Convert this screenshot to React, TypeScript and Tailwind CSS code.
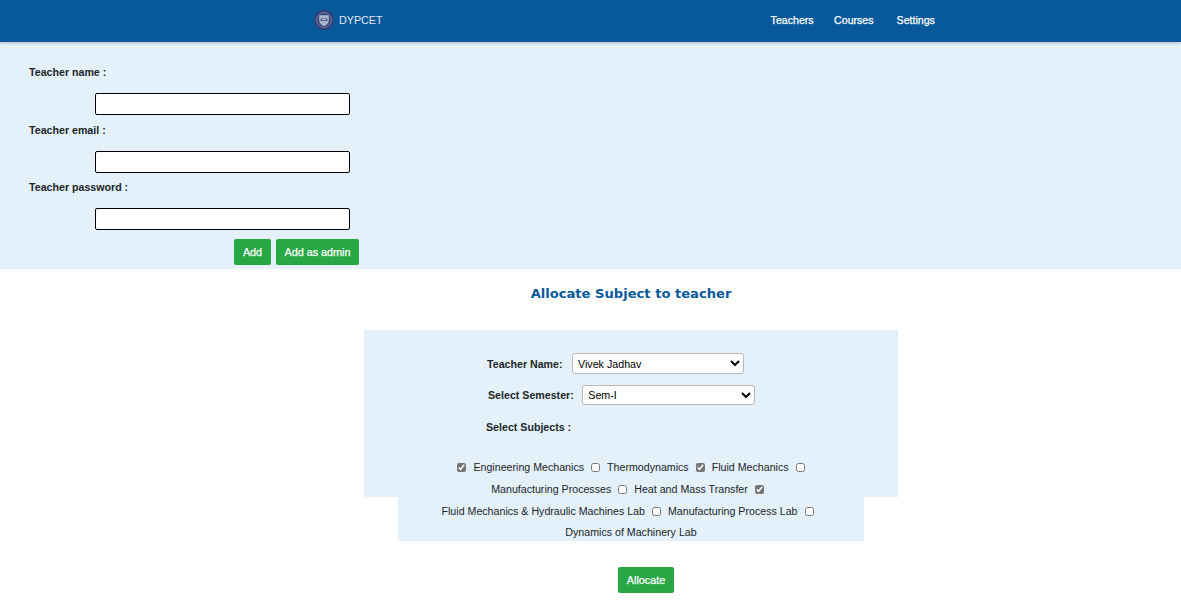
import React from 'react'

const fontSans = "font-['Liberation_Sans',Arial,sans-serif]"

// --- Logo ---

function CollegeLogo() {
  return (
    <svg width="20" height="20" viewBox="0 0 21 21" fill="none" className="mb-[2px]">
      <circle cx="10.5" cy="10.5" r="10.5" fill="#2f3f72" />
      <circle cx="10.5" cy="10.5" r="8" fill="#3c4c80" stroke="#6a78a6" strokeWidth="1" />
      <path d="M5.5 5.5 H15.5 V11 C15.5 14 13 16 10.5 17 C8 16 5.5 14 5.5 11 Z" fill="#a9b4cc" />
      <path d="M7 9 H14 V11.5 H7 Z" fill="#2f3f72" />
      <path d="M8 10.2 H13" stroke="#dfe4ee" strokeWidth="1" />
    </svg>
  )
}

// --- Navbar ---

function Navbar() {
  return (
    <nav className="h-[42px] pb-[1px] bg-[#08599c] flex items-center shadow-[0_1px_3px_rgba(0,0,0,0.25)] relative">
      <div className="ml-[314px] flex items-center gap-[5px]">
        <CollegeLogo />
        <span className="text-[10.75px] text-[#e3e8f0]">DYPCET</span>
      </div>
      <div className="ml-[388px] flex items-center text-[10.6px] text-white [-webkit-text-stroke:0.25px_white]">
        <span>Teachers</span>
        <span className="ml-[20.5px]">Courses</span>
        <span className="ml-[23px]">Settings</span>
      </div>
    </nav>
  )
}

// --- Add teacher form ---

function TeacherField({ label, className = '' }: { label: string; className?: string }) {
  return (
    <div className={`flex flex-col ${className}`}>
      <label className="h-[23px] pl-[29px] text-[10.65px] font-bold leading-[23px] text-[#212529]">{label}</label>
      <input type="text" className="mt-[9px] ml-[95px] w-[255px] h-[22px] bg-white border border-black rounded-[2px]" />
    </div>
  )
}

function Button({ children, className = '' }: { children: React.ReactNode; className?: string }) {
  return (
    <button className={`h-[26px] bg-[#28a745] text-white text-[10.8px] [-webkit-text-stroke:0.25px_white] rounded-[2px] ${className}`}>
      {children}
    </button>
  )
}

function AddTeacherForm() {
  return (
    <section className="h-[227px] bg-[#e4f1fb] pt-[19px] flex flex-col">
      <TeacherField label="Teacher name :" />
      <TeacherField label="Teacher email :" className="mt-[4px]" />
      <TeacherField label="Teacher password :" className="mt-[3px]" />
      <div className="mt-[9px] ml-[234px] flex gap-[5px]">
        <Button className="w-[37px]">Add</Button>
        <Button className="w-[83px]">Add as admin</Button>
      </div>
    </section>
  )
}

// --- Allocate form ---

const subjects = [
  { name: 'Engineering Mechanics', checked: true },
  { name: 'Thermodynamics', checked: false },
  { name: 'Fluid Mechanics', checked: true },
  { name: 'Manufacturing Processes', checked: false },
  { name: 'Heat and Mass Transfer', checked: false },
  { name: 'Fluid Mechanics & Hydraulic Machines Lab', checked: true },
  { name: 'Manufacturing Process Lab', checked: false },
  { name: 'Dynamics of Machinery Lab', checked: false },
]

function SubjectList() {
  return (
    <div className="w-[466px] h-[84px] mx-auto mt-[21px] bg-[#e4f1fb] text-center text-[10.65px] leading-[21.8px] text-[#212529]">
      {subjects.map((s) => (
        <React.Fragment key={s.name}>
          <input
            type="checkbox"
            defaultChecked={s.checked}
            className="w-[9px] h-[9px] mx-[7px] align-[-1px] accent-[#767676]"
          />
          <span className="whitespace-nowrap">{s.name}</span>
        </React.Fragment>
      ))}
    </div>
  )
}

interface SelectRowProps {
  label: string
  value: string
  labelClass: string
  selectClass: string
  rowClass?: string
}

function SelectRow({ label, value, labelClass, selectClass, rowClass = '' }: SelectRowProps) {
  return (
    <div className={`flex items-center ${rowClass}`}>
      <span className={`text-[10.65px] font-bold text-[#212529] ${labelClass}`}>{label}</span>
      <select className={`bg-white border border-[#b9b9b9] rounded-[3px] text-[10.7px] text-black px-[1.5px] ${selectClass}`} defaultValue={value}>
        <option>{value}</option>
      </select>
    </div>
  )
}

function AllocateForm() {
  return (
    <section className="pt-[16px] ml-[81px]">
      <h2 className="text-center text-[13.1px] font-bold text-[#08599c] font-['DejaVu_Sans',Verdana,sans-serif] leading-[18px]">
        Allocate Subject to teacher
      </h2>
      <div className="w-[534px] h-[167px] mx-auto mt-[27px] bg-[#e4f1fb] pt-[23px]">
        <SelectRow label="Teacher Name:" value="Vivek Jadhav" labelClass="ml-[123px] mr-[9px] pt-[2px]" selectClass="w-[172px] h-[21px]" />
        <SelectRow label="Select Semester:" value="Sem-I" labelClass="ml-[124px] mr-[8px] pt-[1px]" selectClass="w-[173px] h-[20px]" rowClass="mt-[11px]" />
        <div className="mt-[13px] ml-[122px] text-[10.65px] font-bold leading-[18px] text-[#212529]">Select Subjects :</div>
        <SubjectList />
      </div>
      <div className="flex mt-[70px] pl-[537px]">
        <Button className="w-[56px]">Allocate</Button>
      </div>
    </section>
  )
}

export default function App() {
  return (
    <div className={`${fontSans} h-[609px] overflow-hidden bg-white`}>
      <Navbar />
      <AddTeacherForm />
      <AllocateForm />
    </div>
  )
}
